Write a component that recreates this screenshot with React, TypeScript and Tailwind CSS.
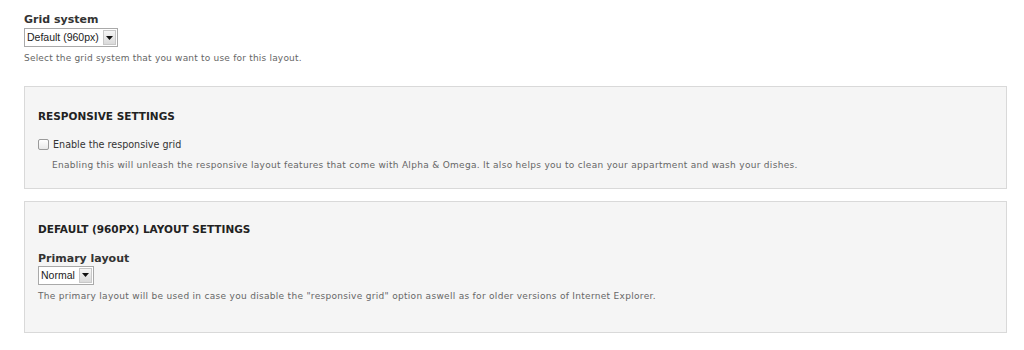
import { ReactNode } from "react"

function FakeSelect({ value }: { value: string }) {
    return (
        <div className="flex h-[19px] w-fit items-stretch border border-[#a9a9a9] bg-white">
            <span className="whitespace-nowrap pl-[2px] pr-[4px] font-['Liberation_Sans',Arial,sans-serif] text-[10.5px] leading-[17px] text-[#222]">
                {value}
            </span>
            <span className="my-[1px] mr-[1px] flex w-[13px] shrink-0 items-center justify-center border border-[#c8c8c8] bg-gradient-to-b from-[#f6f6f6] to-[#dadada]">
                <svg width="7" height="4" viewBox="0 0 7 4">
                    <path d="M0 0h7L3.5 4z" fill="#111" />
                </svg>
            </span>
        </div>
    )
}

function Panel({ title, children, className }: { title: string; children: ReactNode; className?: string }) {
    return (
        <section className={`border border-[#d9d9d9] bg-[#f5f5f5] pl-[13px] ${className ?? ""}`}>
            <h3 className="text-[10.5px] font-bold uppercase leading-none text-[#222]">{title}</h3>
            {children}
        </section>
    )
}

export default function App() {
    return (
        <main className="h-[350px] w-[1024px] bg-white pl-[24px] pr-[17px] pt-[13px] font-['DejaVu_Sans',Verdana,sans-serif]">
            <div>
                <label className="block text-[11px] font-bold leading-[14px] text-[#333]">Grid system</label>
                <div className="mt-[1px]">
                    <FakeSelect value="Default (960px)" />
                </div>
                <p className="mt-[5px] text-[9px] leading-[12px] tracking-[0.2px] text-[#666]">
                    Select the grid system that you want to use for this layout.
                </p>
            </div>

            <Panel title="Responsive settings" className="mt-[22px] h-[103px] pt-[24px]">
                <div className="mt-[17px] flex items-center gap-[4px]">
                    <span className="h-[11px] w-[11px] rounded-[2px] border border-[#9a9a9a] bg-gradient-to-b from-white to-[#e8e8e8]" />
                    <span className="text-[9.6px] leading-[12px] text-[#333]">Enable the responsive grid</span>
                </div>
                <p className="mt-[8px] pl-[14px] text-[9px] leading-[12px] tracking-[0.3px] text-[#666]">
                    Enabling this will unleash the responsive layout features that come with Alpha &amp; Omega. It also helps you to clean your appartment and wash your dishes.
                </p>
            </Panel>

            <Panel title="Default (960px) layout settings" className="mt-[12px] h-[132px] pt-[22px]">
                <label className="mt-[17px] block text-[11px] font-bold leading-[14px] text-[#333]">Primary layout</label>
                <div>
                    <FakeSelect value="Normal" />
                </div>
                <p className="mt-[5px] text-[9px] leading-[12px] tracking-[0.3px] text-[#666]">
                    The primary layout will be used in case you disable the "responsive grid" option aswell as for older versions of Internet Explorer.
                </p>
            </Panel>
        </main>
    )
}
